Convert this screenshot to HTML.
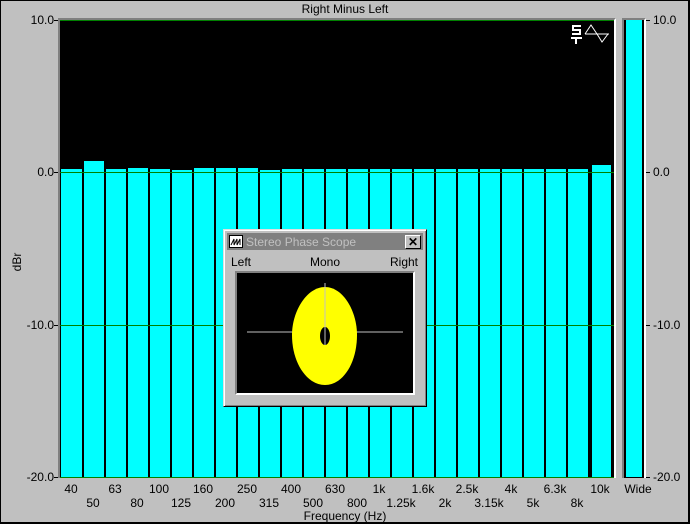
<!DOCTYPE html>
<html><head><style>
*{margin:0;padding:0;box-sizing:border-box}
body{width:690px;height:524px;background:#c0c0c0;position:relative;overflow:hidden;font-family:"Liberation Sans",sans-serif;font-size:11px;color:#000}
.a{position:absolute}
.b{position:absolute;background:#00ffff;bottom:47px;width:20px}
.t{position:absolute;white-space:nowrap;text-align:center;width:40px}
.yl{position:absolute;text-align:right;width:50px}
.gl{position:absolute;left:60px;width:554px;height:1px;background:#008000}
</style></head><body>
<div class="a" style="left:0;top:0;width:690px;height:524px;border:1px solid #000;border-right:2px solid #000;border-bottom:2px solid #000"></div>
<div class="a" style="left:0;top:2px;width:690px;text-align:center;font-size:12px">Right Minus Left</div>
<div class="a" style="left:58px;top:18px;width:558px;height:460px;background:#000;border-left:2px solid #808080;border-top:2px solid #808080;border-right:2px solid #fff"></div>
<div class="gl" style="top:20px"></div>
<div class="b" style="left:61px;top:169px;width:21px"></div>
<div class="b" style="left:84px;top:161px"></div>
<div class="b" style="left:106px;top:169px"></div>
<div class="b" style="left:128px;top:168px"></div>
<div class="b" style="left:150px;top:169px"></div>
<div class="b" style="left:172px;top:170px"></div>
<div class="b" style="left:194px;top:168px"></div>
<div class="b" style="left:216px;top:168px"></div>
<div class="b" style="left:238px;top:168px"></div>
<div class="b" style="left:260px;top:170px"></div>
<div class="b" style="left:282px;top:169px"></div>
<div class="b" style="left:304px;top:169px"></div>
<div class="b" style="left:326px;top:169px"></div>
<div class="b" style="left:348px;top:169px"></div>
<div class="b" style="left:370px;top:169px"></div>
<div class="b" style="left:392px;top:169px"></div>
<div class="b" style="left:414px;top:169px"></div>
<div class="b" style="left:436px;top:169px"></div>
<div class="b" style="left:458px;top:169px"></div>
<div class="b" style="left:480px;top:169px"></div>
<div class="b" style="left:502px;top:169px"></div>
<div class="b" style="left:524px;top:169px"></div>
<div class="b" style="left:546px;top:169px"></div>
<div class="b" style="left:568px;top:169px"></div>
<div class="b" style="left:592px;top:165px;width:19px"></div>
<div class="gl" style="top:172px"></div>
<div class="gl" style="top:325px"></div>
<div class="gl" style="top:477px"></div>
<svg class="a" style="left:570px;top:22px" width="42" height="24">
<g fill="#fff"><rect x="2" y="3" width="9" height="2"/><rect x="2" y="3" width="2" height="5"/><rect x="2" y="7" width="9" height="2"/><rect x="9" y="7" width="2" height="5"/><rect x="2" y="11" width="9" height="2"/><rect x="1" y="15" width="11" height="2"/><rect x="5" y="17" width="2" height="5"/></g>
<path d="M15 12 L21 3 L27 12 L32 20 L38 12 M15 12 H39" stroke="#fff" fill="none" stroke-width="1"/>
</svg>
<div class="yl" style="left:4px;top:13px;font-size:12px">10.0</div>
<div class="yl" style="left:4px;top:165px;font-size:12px">0.0</div>
<div class="yl" style="left:4px;top:318px;font-size:12px">-10.0</div>
<div class="yl" style="left:4px;top:470px;font-size:12px">-20.0</div>
<div class="a" style="left:54px;top:20px;width:4px;height:1px;background:#000"></div>
<div class="a" style="left:54px;top:172px;width:4px;height:1px;background:#000"></div>
<div class="a" style="left:54px;top:325px;width:4px;height:1px;background:#000"></div>
<div class="a" style="left:54px;top:477px;width:4px;height:1px;background:#000"></div>
<div class="a" style="left:2px;top:255px;width:30px;text-align:center;transform:rotate(-90deg);font-size:12px">dBr</div>
<div class="a" style="left:0;top:482px;width:690px;height:40px;font-size:12px">
<div class="t" style="left:51px;top:0">40</div><div class="t" style="left:73px;top:14px">50</div>
<div class="t" style="left:95px;top:0">63</div><div class="t" style="left:117px;top:14px">80</div>
<div class="t" style="left:139px;top:0">100</div><div class="t" style="left:161px;top:14px">125</div>
<div class="t" style="left:183px;top:0">160</div><div class="t" style="left:205px;top:14px">200</div>
<div class="t" style="left:227px;top:0">250</div><div class="t" style="left:249px;top:14px">315</div>
<div class="t" style="left:271px;top:0">400</div><div class="t" style="left:293px;top:14px">500</div>
<div class="t" style="left:315px;top:0">630</div><div class="t" style="left:337px;top:14px">800</div>
<div class="t" style="left:359px;top:0">1k</div><div class="t" style="left:381px;top:14px">1.25k</div>
<div class="t" style="left:403px;top:0">1.6k</div><div class="t" style="left:425px;top:14px">2k</div>
<div class="t" style="left:447px;top:0">2.5k</div><div class="t" style="left:469px;top:14px">3.15k</div>
<div class="t" style="left:491px;top:0">4k</div><div class="t" style="left:513px;top:14px">5k</div>
<div class="t" style="left:535px;top:0">6.3k</div><div class="t" style="left:557px;top:14px">8k</div>
<div class="t" style="left:580px;top:0">10k</div>
<div class="t" style="left:618px;top:0">Wide</div>
<div class="t" style="left:245px;top:27px;width:200px">Frequency (Hz)</div>
</div>
<div class="a" style="left:622px;top:18px;width:24px;height:460px;background:#000;border-left:2px solid #808080;border-top:2px solid #808080;border-right:2px solid #fff"></div>
<div class="a" style="left:626px;top:20px;width:16px;height:457px;background:#00ffff"></div>
<div class="a" style="left:646px;top:20px;width:4px;height:1px;background:#000"></div>
<div class="a" style="left:646px;top:172px;width:4px;height:1px;background:#000"></div>
<div class="a" style="left:646px;top:325px;width:4px;height:1px;background:#000"></div>
<div class="a" style="left:646px;top:477px;width:4px;height:1px;background:#000"></div>
<div class="a" style="left:653px;top:13px;font-size:12px">10.0</div>
<div class="a" style="left:653px;top:165px;font-size:12px">0.0</div>
<div class="a" style="left:653px;top:318px;font-size:12px">-10.0</div>
<div class="a" style="left:653px;top:470px;font-size:12px">-20.0</div>
<div class="a" style="left:223px;top:229px;width:204px;height:178px;background:#c0c0c0;border:1px solid;border-color:#dfdfdf #000 #000 #dfdfdf;box-shadow:inset 1px 1px #fff,inset -1px -1px #808080"></div>
<div class="a" style="left:227px;top:233px;width:196px;height:17px;background:#808080"></div>
<div class="a" style="left:229px;top:235px;width:14px;height:13px;background:#fff;border:1px solid #000"></div>
<svg class="a" style="left:230px;top:237px" width="12" height="10"><path d="M1 8 L4 2 V8 L7 2 V8 L10 2 V8" stroke="#000" fill="none"/></svg>
<div class="a" style="left:246px;top:235px;color:#c0c0c0;font-size:12px">Stereo Phase Scope</div>
<div class="a" style="left:405px;top:235px;width:16px;height:14px;background:#c0c0c0;border:1px solid;border-color:#fff #000 #000 #fff;font-size:12px;font-weight:bold;text-align:center;line-height:12px">✕</div>
<div class="a" style="left:231px;top:255px;font-size:12px">Left</div>
<div class="a" style="left:310px;top:255px;font-size:12px">Mono</div>
<div class="a" style="left:390px;top:255px;font-size:12px">Right</div>
<div class="a" style="left:235px;top:271px;width:180px;height:124px;background:#000;border-left:2px solid #808080;border-top:2px solid #808080;border-right:2px solid #fff;border-bottom:2px solid #fff"></div>
<svg class="a" style="left:237px;top:273px" width="176" height="120">
<line x1="10" y1="59" x2="166" y2="59" stroke="#c0c0c0"/>
<path d="M88 14 C106 14 120 38 120 62 C120 90 106 112 88 112 C70 112 55 90 55 62 C55 38 70 14 88 14 Z" fill="#ff0"/>
<ellipse cx="88" cy="63" rx="5" ry="9" fill="#000"/>
<line x1="88" y1="10" x2="88" y2="72" stroke="#c0c0c0"/>
</svg>
</body></html>
